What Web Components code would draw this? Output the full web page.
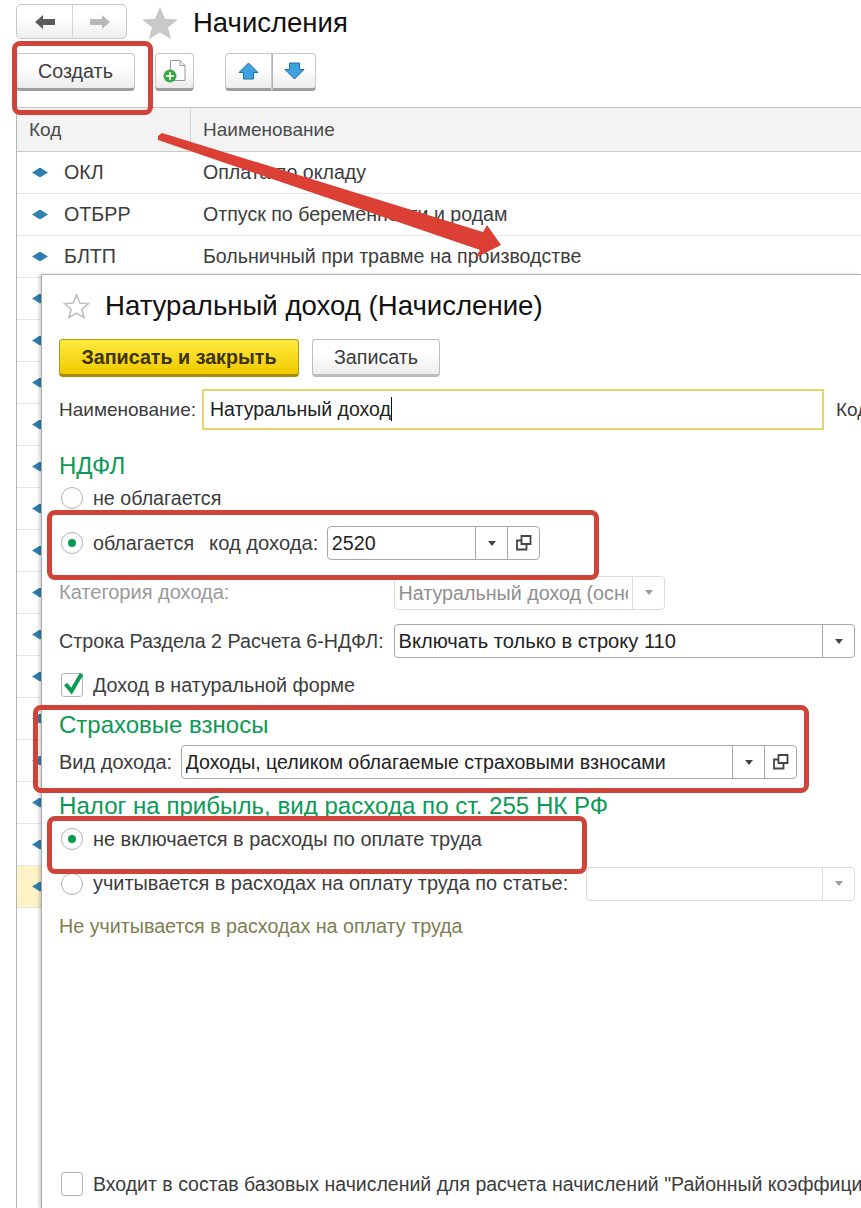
<!DOCTYPE html>
<html lang="ru">
<head>
<meta charset="utf-8">
<title>Начисления</title>
<style>
  html, body { margin: 0; height: 100%; background: #fff; overflow: hidden; }
  body { font: 19.7px "Liberation Sans", Arial, sans-serif; color: #3c3c3c; }
</style>
</head>
<body>
<list-screen></list-screen>
<charge-dialog></charge-dialog>
<mark-box style="left:12px;top:41px;width:141px;height:74px"></mark-box>
<mark-box style="left:47px;top:510px;width:552px;height:70px"></mark-box>
<mark-box style="left:33px;top:705px;width:776px;height:88px"></mark-box>
<mark-box style="left:47px;top:816px;width:540px;height:58px"></mark-box>
<mark-arrow></mark-arrow>

<script>
const ICON_COPY = `<svg width="16" height="16" viewBox="0 0 16 16" fill="none" stroke="#444" stroke-width="1.8"><path d="M5.500 9V1h9v8z"/><path d="M5.500 5.500H1v9h9.500V9"/></svg>`;

class ToolButton extends HTMLElement {
  constructor() {
    super();
    this.attachShadow({ mode: "open" }).innerHTML = `
      <style>
        :host { display: flex; align-items: center; justify-content: center; box-sizing: border-box;
          height: 38px; border: 1px solid #c8c8c8; border-bottom: 3px solid #9d9d9d;
          border-radius: 4px; background: linear-gradient(#fff 40%, #ececec); color: #3c3c3c; }
      </style>
      <slot></slot>`;
  }
}
customElements.define("tool-button", ToolButton);

class ListScreen extends HTMLElement {
  constructor() {
    super();
    const rows = [
      ["ОКЛ", "Оплата по окладу"],
      ["ОТБРР", "Отпуск по беременности и родам"],
      ["БЛТП", "Больничный при травме на производстве"],
      ...Array(14).fill(["", ""]),
      ["", "", "sel"]
    ];
    this.attachShadow({ mode: "open" }).innerHTML = `
      <style>
        :host { display: block; height: 100%; padding-left: 16px; overflow: hidden; }
        .nav { display: flex; align-items: center; height: 53px; }
        .pair { display: flex; border: 1px solid #c8c8c8; border-radius: 5px; height: 35px; box-sizing: border-box;
          background: linear-gradient(#fff 40%, #eee); margin-top: -10px; }
        .pair span { display: flex; align-items: center; justify-content: center; }
        .pair span + span { border-left: 1px solid #d4d4d4; }
        .star { margin: -8px 15px 0 15px; display: block; }
        h1 { font-size: 27.500px; font-weight: 400; color: #111; margin: -8px 0 0; }
        .tools { display: flex; height: 38px; }
        .tools > tool-button:nth-child(1) { width: 119px; }
        .tools > tool-button:nth-child(2) { width: 39px; margin-left: 20px; }
        .updown { display: flex; margin-left: 31px; }
        .updown tool-button { width: 47px; border-radius: 4px 0 0 4px; }
        .updown tool-button + tool-button { width: 44px; border-left: 1px solid #b4b4b4; border-radius: 0 4px 4px 0; }
        .table { margin-top: 16px; border-left: 1px solid #b5b5b5; border-top: 1px solid #c4c4c4; height: 1101px; }
        .head, .row { display: grid; grid-template-columns: 173px 1fr; align-items: center; box-sizing: border-box; }
        .head { height: 44px; background: #f3f3f3; border-bottom: 1px solid #c9c9c9; color: #4b4b4b; font-size: 19px; }
        .head div { padding-left: 12px; line-height: 43px; }
        .head div + div { border-left: 1px solid #d6d6d6; }
        .row { height: 42px; border-bottom: 1px solid #e6e6e6; }
        .row.sel { background: #fdf3c7; }
        .code { display: flex; align-items: center; gap: 16px; padding-left: 15px; }
        .dia { flex: none; width: 16px; height: 10px; background: #2f7fb3; clip-path: polygon(0 50%, 50% 0, 100% 50%, 50% 100%); }
        .name { padding-left: 13px; white-space: nowrap; font-size: 19.600px; }
      </style>
      <div class="nav">
        <div class="pair">
          <span style="width:55px"><svg width="22" height="16" viewBox="0 0 22 16"><path d="M1 8l8-7v4h12v6H9v4z" fill="#5c5c5c"/></svg></span>
          <span style="width:53px"><svg width="22" height="16" viewBox="0 0 22 16"><path d="M21 8l-8-7v4H1v6h12v4z" fill="#b9b9b9"/></svg></span>
        </div>
        <svg class="star" width="36" height="32" viewBox="0 0 36 34" preserveAspectRatio="none"><path d="M18 0l5 12.600 13 .8-10 8.500 3.200 12.100L18 27l-11.200 7L10 21.900 0 13.400l13-.8z" fill="#c9c9c9"/></svg>
        <h1>Начисления</h1>
      </div>
      <div class="tools">
        <tool-button>Создать</tool-button>
        <tool-button>
          <svg width="24" height="24" viewBox="0 0 24 24"><path d="M7.500 1.500H17l5 5v15H7.500z" fill="#fff" stroke="#9a9a9a"/><path d="M17 1.500v5h5" fill="none" stroke="#9a9a9a"/><circle cx="7" cy="17" r="6.500" fill="#3fa648"/><path d="M7 13v8M3 17h8" stroke="#fff" stroke-width="1.500"/></svg>
        </tool-button>
        <div class="updown">
          <tool-button><svg width="21" height="18" viewBox="0 0 21 18"><path d="M10.500 1L20 10.500h-4.500V17h-10v-6.500H1z" fill="#3fa2e0" stroke="#1f6ea6"/></svg></tool-button>
          <tool-button><svg width="21" height="18" viewBox="0 0 21 18"><path d="M10.500 17L20 7.500h-4.500V1h-10v6.500H1z" fill="#3fa2e0" stroke="#1f6ea6"/></svg></tool-button>
        </div>
      </div>
      <div class="table">
        <div class="head"><div>Код</div><div>Наименование</div></div>
        ${rows.map(([c, n, s]) => `<div class="row ${s || ""}"><div class="code"><i class="dia"></i><span>${c}</span></div><div class="name">${n}</div></div>`).join("")}
      </div>`;
  }
}
customElements.define("list-screen", ListScreen);

class ComboField extends HTMLElement {
  constructor() {
    super();
    const off = this.hasAttribute("disabled");
    const copy = this.hasAttribute("copy");
    this.attachShadow({ mode: "open" }).innerHTML = `
      <style>
        :host { display: flex; box-sizing: border-box; height: 34px; border: 1px solid ${off ? "#dcdcdc" : "#a8a8a8"};
          border-radius: 4px; background: #fff; color: ${off ? "#8f8f8f" : "#222"}; overflow: hidden; }
        .val { flex: 1; min-width: 0; margin: 0 4px 0 3.500px; line-height: 32px; white-space: nowrap; overflow: hidden; }
        .btn { flex: none; width: 31px; display: flex; align-items: center; justify-content: center;
          border-left: 1px solid ${off ? "#dcdcdc" : "#a8a8a8"}; }
        .arrow { width: 0; height: 0; border: 4px solid transparent; border-top: 5px solid ${off ? "#9c9c9c" : "#444"}; border-bottom: 0; }
      </style>
      <div class="val"><slot></slot></div>
      <div class="btn"><i class="arrow"></i></div>
      ${copy ? `<div class="btn">${ICON_COPY}</div>` : ""}`;
  }
}
customElements.define("combo-field", ComboField);

class ChoiceMark extends HTMLElement {
  constructor() {
    super();
    const on = this.hasAttribute("checked");
    const box = this.getAttribute("type") === "check";
    this.attachShadow({ mode: "open" }).innerHTML = `
      <style>
        :host { display: flex; align-items: center; gap: 10px; white-space: nowrap; color: #3c3c3c; }
        .mark { position: relative; flex: none; box-sizing: border-box; width: 22px; height: ${box ? 24 : 22}px; border: 1px solid #b4b4b4;
          border-radius: ${box ? "3px" : "50%"}; background: #fff; display: flex; align-items: center; justify-content: center; }
        .dot { width: 8px; height: 8px; border-radius: 50%; background: #0a9a55; }
        svg { position: absolute; left: 1px; top: -3px; }
      </style>
      <span class="mark">${on ? (box
        ? `<svg width="21" height="24" viewBox="0 0 21 24"><path d="M2.500 13l6 7L18.500 3" fill="none" stroke="#0a9a55" stroke-width="4"/></svg>`
        : `<i class="dot"></i>`) : ""}</span>
      <span><slot></slot></span>`;
  }
}
customElements.define("choice-mark", ChoiceMark);

class ChargeDialog extends HTMLElement {
  constructor() {
    super();
    this.attachShadow({ mode: "open" }).innerHTML = `
      <style>
        :host { position: absolute; left: 41px; top: 274px; right: 0; bottom: 0; background: #fff; overflow: hidden;
          border-left: 1px solid #a9a9a9; border-top: 1px solid #b0b0b0; box-shadow: -2px 0 3px rgba(0,0,0,.18);
          color: #3c3c3c; }
        .wrap { display: flex; flex-direction: column; height: 100%; box-sizing: border-box; padding: 0 6px 0 17px; }
        .title { display: flex; align-items: center; gap: 15px; box-sizing: border-box; height: 64px; padding: 0 0 2px 4px; }
        .title span { font-size: 27.600px; color: #111; }
        .btns { display: flex; gap: 13px; height: 38px; }
        .save { box-sizing: border-box; width: 240px; border: 1px solid #b09a10; border-bottom: 3px solid #a38c0e; border-radius: 4px;
          background: linear-gradient(#fdea3f, #f1ca00); font-weight: 700; color: #3d3300; display: flex; align-items: center; justify-content: center; }
        .write { width: 128px; border-color: #bcbcbc; }
        .name { display: flex; align-items: center; height: 41px; margin-top: 12px; margin-right: -40px; white-space: nowrap; font-size: 19px; }
        .input { box-sizing: border-box; flex: none; width: 622px; height: 41px; margin: 0 12px 0 6px; border: 2px solid #e8d36a; color: #222; padding: 0 6px; line-height: 37px; font-size: 19.500px; }
        .caret { display: inline-block; width: 1.500px; height: 24px; background: #111; vertical-align: -5px; }
        h2 { font-size: 24px; font-weight: 400; color: #0a9a55; margin: 0; line-height: 28px; }
        .row { display: flex; align-items: center; white-space: nowrap; }
        .r1 { margin-top: 22px; }
        .r2 { margin-top: 5px; height: 26px; padding-left: 2px; }
        .r3 { margin-top: 15px; height: 34px; padding-left: 2px; }
        .r3 .lbl { margin-left: 15px; margin-right: 9px; font-size: 20.200px; }
        .r4 { margin-top: 15px; height: 35px; color: #9a9a9a; font-size: 20px; }
        .r5 { margin-top: 14px; height: 34px; }
        .r6 { margin-top: 14px; height: 26px; padding-left: 2px; }
        .r7 { margin-top: 13px; }
        .r8 { margin-top: 6px; height: 34px; }
        .r8 .w4 { font-size: 19.600px; }
        .r8 > span { font-size: 20px; }
        .r9 { margin-top: 13px; font-size: 24.100px; }
        .r10 { margin-top: 6px; height: 26px; padding-left: 2px; font-size: 19.900px; }
        .r11 { margin-top: 15px; height: 33px; padding-left: 2px; font-size: 19.900px; }
        .note { margin-top: 15px; line-height: 22px; color: #7d7d50; }
        .base { margin-top: auto; margin-bottom: 12px; padding-left: 2px; font-size: 19.500px; }
        .w1 { width: 213px; }
        .w2 { width: 271px; }
        .w3 { width: 461px; font-size: 20.100px; }
        .w4 { width: 616px; }
        .w5 { width: 269px; margin-left: auto; }
      </style>
      <div class="wrap">
        <div class="title">
          <svg width="27" height="26" viewBox="0 0 27 26"><path d="M13.500 2l3.400 8 8.600.6-6.600 5.600 2.100 8.300-7.500-4.500-7.500 4.500 2.100-8.300L1.500 10.600l8.600-.6z" fill="#fff" stroke="#bdbdbd" stroke-width="1.500"/></svg>
          <span>Натуральный доход (Начисление)</span>
        </div>
        <div class="btns">
          <div class="save">Записать и закрыть</div>
          <tool-button class="write">Записать</tool-button>
        </div>
        <div class="name">Наименование:<div class="input">Натуральный доход<i class="caret"></i></div>Код</div>
        <h2 class="r1">НДФЛ</h2>
        <div class="row r2"><choice-mark>не облагается</choice-mark></div>
        <div class="row r3"><choice-mark checked>облагается</choice-mark><span class="lbl">код дохода:</span><combo-field class="w1" copy>2520</combo-field></div>
        <div class="row r4"><span style="width:335px">Категория дохода:</span><combo-field class="w2" disabled style="font-size:19.700px">Натуральный доход (осно</combo-field></div>
        <div class="row r5"><span style="width:335px">Строка Раздела 2 Расчета 6-НДФЛ:</span><combo-field class="w3">Включать только в строку 110</combo-field></div>
        <div class="row r6"><choice-mark type="check" checked>Доход в натуральной форме</choice-mark></div>
        <h2 class="r7">Страховые взносы</h2>
        <div class="row r8"><span style="width:122px">Вид дохода:</span><combo-field class="w4" copy>Доходы, целиком облагаемые страховыми взносами</combo-field></div>
        <h2 class="r9">Налог на прибыль, вид расхода по ст. 255 НК РФ</h2>
        <div class="row r10"><choice-mark checked>не включается в расходы по оплате труда</choice-mark></div>
        <div class="row r11"><choice-mark>учитывается в расходах на оплату труда по статье:</choice-mark><combo-field class="w5" disabled></combo-field></div>
        <div class="note">Не учитывается в расходах на оплату труда</div>
        <div class="row base"><choice-mark type="check">Входит в состав базовых начислений для расчета начислений "Районный коэффициент"</choice-mark></div>
      </div>`;
  }
}
customElements.define("charge-dialog", ChargeDialog);

// annotations laid over the screenshot
class MarkBox extends HTMLElement {
  constructor() {
    super();
    this.attachShadow({ mode: "open" }).innerHTML = `
      <style>
        :host { position: absolute; box-sizing: border-box; border: 5px solid #cf4338; border-radius: 8px; pointer-events: none; }
      </style>`;
  }
}
customElements.define("mark-box", MarkBox);

class MarkArrow extends HTMLElement {
  constructor() {
    super();
    this.attachShadow({ mode: "open" }).innerHTML = `
      <style>:host { position: absolute; left: 0; top: 0; pointer-events: none; } svg { display: block; }</style>
      <svg width="861" height="300" viewBox="0 0 861 300">
        <path d="M158 136l4-3 321 99 4-7 14 20-26 13 5-8-322-110z" fill="#dc3f33"/>
      </svg>`;
  }
}
customElements.define("mark-arrow", MarkArrow);
</script>
</body>
</html>
